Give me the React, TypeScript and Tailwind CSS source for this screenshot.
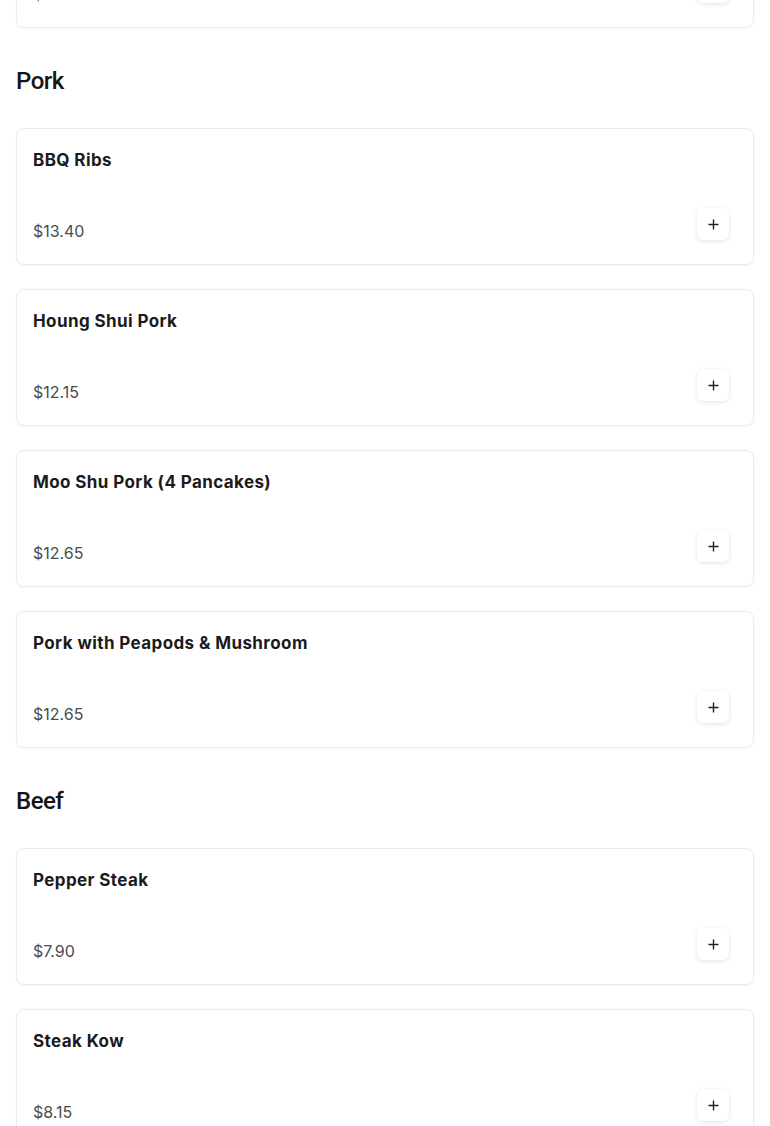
const sections: { title?: string; items: { name: string; price: string }[] }[] = [
  { items: [{ name: "Sweet & Sour Chicken", price: "$12.50" }] },
  {
    title: "Pork",
    items: [
      { name: "BBQ Ribs", price: "$13.40" },
      { name: "Houng Shui Pork", price: "$12.15" },
      { name: "Moo Shu Pork (4 Pancakes)", price: "$12.65" },
      { name: "Pork with Peapods & Mushroom", price: "$12.65" },
    ],
  },
  {
    title: "Beef",
    items: [
      { name: "Pepper Steak", price: "$7.90" },
      { name: "Steak Kow", price: "$8.15" },
    ],
  },
];

function PlusIcon() {
  return (
    <svg width="11" height="11" viewBox="0 0 11 11" fill="none" stroke="#222" strokeWidth="1.4">
      <path d="M5.5 0.5v10M0.5 5.5h10" />
    </svg>
  );
}

function ItemCard({ name, price }: { name: string; price: string }) {
  return (
    <div className="rounded-lg border border-[#ececec] bg-white pt-4 pr-6 pb-6 pl-4 shadow-[0_1px_3px_rgba(0,0,0,0.04)]">
      <p className="pt-px text-[17px] leading-[29px] font-bold tracking-[0.4px] text-[#1b1b1b]">{name}</p>
      <div className="mt-[33px] flex items-end justify-between">
        <span className="text-[16px] leading-[18px] text-[#4b4b4b]">{price}</span>
        <button className="flex h-8 w-8 items-center justify-center rounded-md bg-white shadow-[0_1px_4px_rgba(0,0,0,0.12)]">
          <PlusIcon />
        </button>
      </div>
    </div>
  );
}

export default function App() {
  return (
    <div className="h-[1126px] overflow-hidden bg-white px-4 font-['Inter',sans-serif]">
      {sections.map((s, si) => (
        <section key={si}>
          {s.title ? (
            <h2 className="mt-[37px] mb-[31px] font-['Roboto',sans-serif] text-[24px] leading-[32px] font-medium tracking-[-0.5px] text-[#151515]">{s.title}</h2>
          ) : null}
          <div className={"flex flex-col gap-6 " + (si === 0 ? "-mt-[109px]" : "")}>
            {s.items.map((it) => (
              <ItemCard key={it.name} name={it.name} price={it.price} />
            ))}
          </div>
        </section>
      ))}
    </div>
  );
}
